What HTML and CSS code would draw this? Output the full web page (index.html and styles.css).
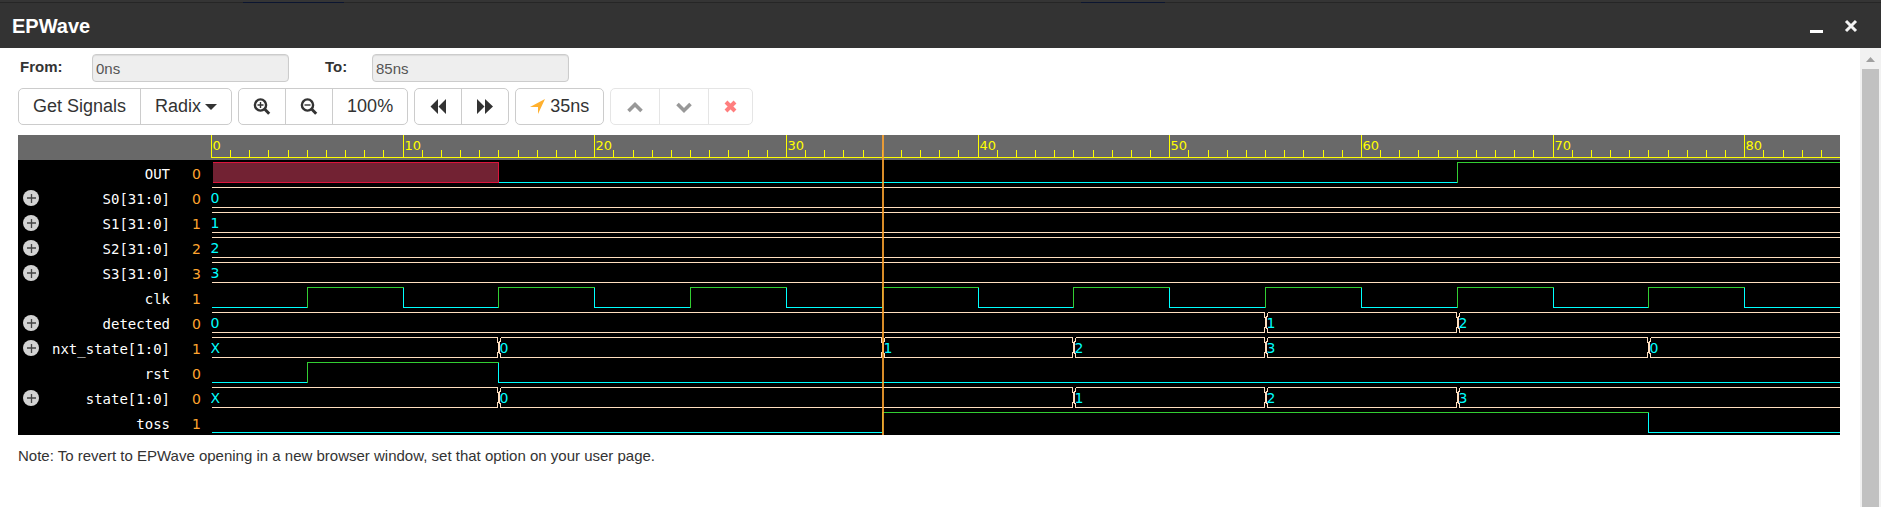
FILE: index.html
```html
<!DOCTYPE html>
<html lang="en">
<head>
<meta charset="utf-8">
<title>EPWave</title>
<link rel="stylesheet" href="styles.css">
</head>
<body>
<div class="backdrop"></div>
<header class="titlebar">
  <h1 class="title">EPWave</h1>
  <button class="win-btn" type="button" aria-label="Minimize"><svg width="14" height="14" viewBox="0 0 14 14"><path d="M0 11h13v3H0z" fill="#fff"/></svg></button>
  <button class="win-btn" type="button" aria-label="Close"><svg width="14" height="14" viewBox="0 0 14 14"><path d="M2 2l10 10M12 2L2 12" stroke="#f4f4f4" stroke-width="3" fill="none"/></svg></button>
</header>
<div class="body">
  <main class="content">
    <form class="range">
      <label class="range-label" for="from">From:</label>
      <input class="range-input" id="from" type="text" value="0ns" disabled>
      <label class="range-label range-label-to" for="to">To:</label>
      <input class="range-input" id="to" type="text" value="85ns" disabled>
    </form>
    <div class="toolbar">
      <div class="group">
        <button class="btn" type="button">Get Signals</button>
        <button class="btn" type="button">Radix<span class="caret"></span></button>
      </div>
      <div class="group">
        <button class="btn" type="button" aria-label="Zoom in"><svg class="icon" viewBox="0 0 17 17"><circle cx="7" cy="7" r="5.6" fill="none" stroke="#333" stroke-width="2.4"/><path d="M11.3 11.3l4.4 4.4" stroke="#333" stroke-width="3"/><path d="M4 7h6M7 4v6" stroke="#333" stroke-width="1.4"/></svg></button>
        <button class="btn" type="button" aria-label="Zoom out"><svg class="icon" viewBox="0 0 17 17"><circle cx="7" cy="7" r="5.6" fill="none" stroke="#333" stroke-width="2.4"/><path d="M11.3 11.3l4.4 4.4" stroke="#333" stroke-width="3"/><path d="M4 7h6" stroke="#333" stroke-width="1.4"/></svg></button>
        <button class="btn" type="button">100%</button>
      </div>
      <div class="group">
        <button class="btn" type="button" aria-label="Back"><svg class="icon" viewBox="0 0 17 17"><path d="M8.500 1v15L1 8.500zM16.500 1v15L9 8.500z" fill="#333"/></svg></button>
        <button class="btn" type="button" aria-label="Forward"><svg class="icon" viewBox="0 0 17 17"><path d="M.5 1v15L8 8.500zM8.500 1v15L16.500 8.500z" fill="#333"/></svg></button>
      </div>
      <div class="group">
        <button class="btn" type="button"><svg class="icon icon-arrow" viewBox="0 0 15 15"><path d="M15 0L8 15V8H0z" fill="#ffb02e"/></svg>35ns</button>
      </div>
      <div class="group group-off">
        <button class="btn" type="button" disabled aria-label="Previous edge"><svg class="icon" viewBox="0 0 17 17"><path d="M2 13l6.500-6.500L15 13" fill="none" stroke="#333" stroke-width="3.600"/></svg></button>
        <button class="btn" type="button" disabled aria-label="Next edge"><svg class="icon" viewBox="0 0 17 17"><path d="M2 6l6.500 6.500L15 6" fill="none" stroke="#333" stroke-width="3.600"/></svg></button>
        <button class="btn" type="button" disabled aria-label="Remove"><svg class="icon icon-x" viewBox="0 0 13 13"><path d="M2 2l9 9M11 2l-9 9" stroke="#f00" stroke-width="4"/></svg></button>
      </div>
    </div>
    <section class="viewer" aria-label="Waveforms">
      <div class="signals" id="signals"></div>
      <div class="waves" id="waves"></div>
    </section>
    <p class="note">Note: To revert to EPWave opening in a new browser window, set that option on your user page.</p>
  </main>
  <div class="scrollbar"><svg class="scroll-arrow" viewBox="0 0 9 5"><path d="M4.500 0L9 5H0z" fill="#a0a0a0"/></svg><div class="thumb"></div></div>
</div>
<script src="waves.js"></script>
</body>
</html>
```
FILE: styles.css
```css
* { box-sizing: border-box; }
body {
  margin: 0;
  height: 100vh;
  display: flex;
  flex-direction: column;
  overflow: hidden;
  background: #fff;
  color: #333;
  font-family: "Liberation Sans", Arial, sans-serif;
  font-size: 15px;
}
.backdrop {
  height: 3px;
  flex: none;
  background:
    linear-gradient(#0b1530, #0b1530) 243px 2px / 101px 1px no-repeat,
    linear-gradient(#0b1530, #0b1530) 1081px 2px / 84px 1px no-repeat,
    linear-gradient(#353535 2px, #262626 2px);
}
.titlebar {
  flex: none;
  height: 45px;
  display: flex;
  align-items: center;
  gap: 20px;
  padding: 0 23px 0 12px;
  background: #333;
}
.title { flex: 1; margin: 0; font-size: 20px; line-height: 24px; color: #fff; }
.win-btn { display: flex; padding: 0; border: 0; background: none; }
.body { flex: 1; display: flex; min-height: 0; }
.content { flex: 1; min-width: 0; padding: 6px 20px 0 18px; }
.range { display: flex; align-items: center; height: 28px; }
.range-label { width: 74px; padding: 0 0 3px 2px; font-weight: bold; line-height: 20px; }
.range-label-to { width: 47px; margin-left: 36px; padding-left: 0; }
.range-input {
  width: 197px;
  height: 28px;
  padding: 0 3px;
  border: 1px solid #ccc;
  border-radius: 4px;
  background: #eee;
  box-shadow: inset 0 1px 1px rgba(0, 0, 0, .08);
  color: #555;
  font: 15px "Liberation Sans", Arial, sans-serif;
}
.toolbar { display: flex; gap: 6px; margin-top: 6px; }
.group { display: flex; border: 1px solid #ccc; border-radius: 5px; }
.group-off { opacity: .5; }
.btn {
  display: flex;
  align-items: center;
  height: 35px;
  padding: 0 14px;
  border: 0;
  background: none;
  color: #333;
  font: 18px "Liberation Sans", Arial, sans-serif;
}
.group-off .btn { padding: 0 15px; }
.btn + .btn { border-left: 1px solid #ccc; }
.icon { width: 18px; height: 17px; }
.icon-arrow { width: 15px; height: 15px; margin-right: 5px; }
.icon-x { width: 13px; height: 13px; }
.caret { margin-left: 4px; border: 6px solid transparent; border-top-color: #333; border-bottom: 0; }
.viewer { display: flex; margin-top: 10px; background: linear-gradient(#696969 25px, #000 25px); }
.signals { width: 193px; flex: none; padding-top: 25px; font-family: "DejaVu Sans Mono", monospace; font-size: 14px; }
.signal { display: grid; grid-template-columns: 16px 1fr 31px; height: 25px; line-height: 29px; padding: 0 10px 0 5px; }
.expand { display: flex; margin-top: 5px; padding: 0; border: 0; background: none; }
.name { grid-column: 2; color: #fff; text-align: right; }
.value { grid-column: 3; color: #ffa52f; text-align: right; font-family: "DejaVu Sans", sans-serif; }
.waves { flex: 1; min-width: 0; }
.chart { display: block; width: 100%; font-family: "DejaVu Sans", sans-serif; font-size: 14px; }
.chart path { fill: none; stroke-width: 1; shape-rendering: crispEdges; }
.chart .tick { stroke: #ff0; }
.chart .hi { stroke: #32cd32; }
.chart .lo { stroke: #0ff; }
.chart .bus { stroke: #ffdfbf; }
.chart .unknown { fill: #722233; stroke: #dc143c; }
.chart .cursor { stroke: #ffa52f; stroke-width: 2; opacity: .85; }
.chart .ruler-text { fill: #ff0; font-size: 13px; }
.chart .bus-text { fill: #0ff; }
.note { margin: 11px 0 0; line-height: 20px; }
.scrollbar { width: 21px; flex: none; display: flex; flex-direction: column; align-items: center; background: #f1f1f1; }
.scroll-arrow { width: 9px; height: 5px; margin: 9px 0 7px; }
.thumb { width: 17px; flex: 1; background: #c1c1c1; }
```
FILE: waves.js
```js
const END = 85, CURSOR = 35, ROW = 25, HIGH = 2.5, LOW = 22.5;
const clock = [[0, 0]];
for (let t = 5; t < END; t += 5) clock.push([t, t / 5 % 2]);

const signals = [
  { name: 'OUT', value: 0, bits: [[0, 'x'], [15, 0], [65, 1]] },
  { name: 'S0[31:0]', value: 0, bus: [[0, '0']] },
  { name: 'S1[31:0]', value: 1, bus: [[0, '1']] },
  { name: 'S2[31:0]', value: 2, bus: [[0, '2']] },
  { name: 'S3[31:0]', value: 3, bus: [[0, '3']] },
  { name: 'clk', value: 1, bits: clock },
  { name: 'detected', value: 0, bus: [[0, '0'], [55, '1'], [65, '2']] },
  { name: 'nxt_state[1:0]', value: 1, bus: [[0, 'X'], [15, '0'], [35, '1'], [45, '2'], [55, '3'], [75, '0']] },
  { name: 'rst', value: 0, bits: [[0, 0], [5, 1], [15, 0]] },
  { name: 'state[1:0]', value: 0, bus: [[0, 'X'], [15, '0'], [45, '1'], [55, '2'], [65, '3']] },
  { name: 'toss', value: 1, bits: [[0, 0], [35, 1], [75, 0]] }
];

const plus = '<svg width="16" height="16" viewBox="0 0 16 16"><circle cx="8" cy="8" r="8" fill="#d3d3d3"/><path d="M4 8h9M8.500 4v9" stroke="#444" stroke-width="1.300"/></svg>';

document.getElementById('signals').innerHTML = signals.map(s =>
  `<div class="signal">${s.bus ? `<button class="expand" type="button" aria-label="Expand ${s.name}">${plus}</button>` : ''}<span class="name">${s.name}</span><span class="value">${s.value}</span></div>`
).join('');

function draw() {
  const host = document.getElementById('waves');
  const width = host.clientWidth;
  const height = ROW * (signals.length + 1);
  const x = t => Math.round(t * width / END) + 0.5;
  const path = (cls, d) => `<path class="${cls}" d="${d}"/>`;
  const text = (cls, tx, ty, s) => `<text class="${cls}" x="${tx}" y="${ty}">${s}</text>`;
  let out = path('tick', `M0 22.5H${width}`);

  for (let t = 0; t < END; t++) {
    out += path('tick', `M${x(t)} ${t % 10 ? 15 : 0}V22`);
    if (t % 10 === 0) out += text('ruler-text', x(t) + 1, 15, t);
  }

  signals.forEach((s, i) => {
    const top = ROW * (i + 1), hi = top + HIGH, lo = top + LOW;
    const steps = s.bits || s.bus;
    steps.forEach(([t, v], k) => {
      const a = x(t);
      const last = k === steps.length - 1;
      const b = last ? width : x(steps[k + 1][0]);
      if (s.bits) {
        if (v === 'x') {
          out += path('unknown', `M${a + 1} ${hi}H${b}V${lo}H${a + 1}`);
        } else {
          const from = v ? lo : hi, to = v ? hi : lo;
          const edge = k && steps[k - 1][1] !== 'x';
          out += path(v ? 'hi' : 'lo', edge ? `M${a} ${from}V${to}H${b}` : `M${a} ${to}H${b}`);
        }
      } else {
        const l = k ? a + 2 : a, r = last ? b : b - 1;
        out += path('bus', `M${l} ${hi}H${r}M${l} ${lo}H${r}`);
        if (k) {
          out += path('bus', `M${a - 1} ${hi}v5h1v10h-1v5M${a + 2} ${hi}v4h-1v12h1v4`);
        }
        out += text('bus-text', k ? a + 1 : a - 1, top + 18, v);
      }
    });
  });

  out += path('cursor', `M${x(CURSOR) + 0.5} 0V${height}`);
  host.innerHTML = `<svg class="chart" height="${height}">${out}</svg>`;
}

draw();
window.addEventListener('resize', draw);
```
